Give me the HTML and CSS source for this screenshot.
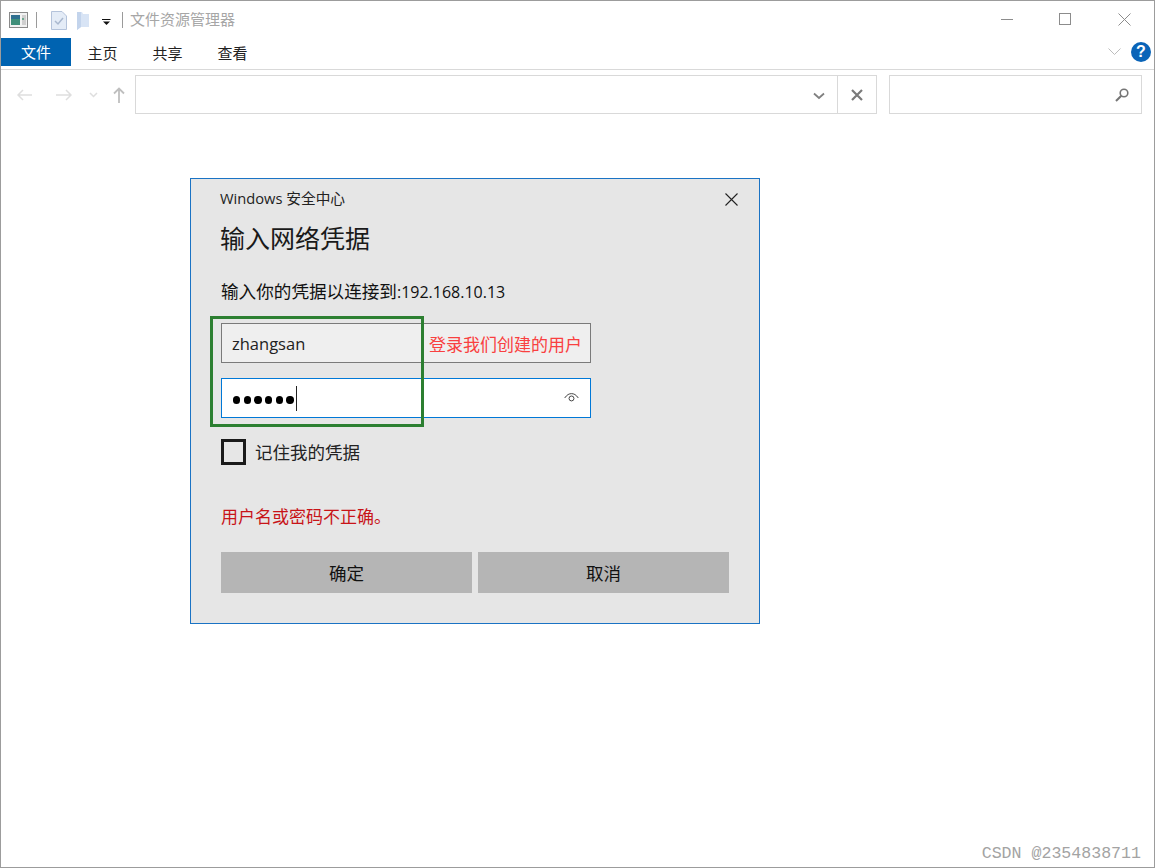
FILE: index.html
```html
<!DOCTYPE html>
<html lang="zh-CN">
<head>
<meta charset="utf-8">
<title>文件资源管理器</title>
<link rel="stylesheet" href="styles.css">
</head>
<body>
<div class="window">
  <header class="titlebar">
    <svg class="ic-app" width="20" height="16" viewBox="0 0 20 16"><rect x=".5" y=".5" width="18" height="15" fill="#f2f2f2" stroke="#8a8a8a"/><rect x="2" y="3" width="9" height="10" fill="#3f8f7a"/><rect x="2" y="3" width="9" height="4" fill="#2f6f8f"/><rect x="13" y="3" width="4" height="10" fill="#cfcfcf"/><rect x="13" y="6" width="2" height="2" fill="#6fa98f"/></svg>
    <span class="qsep"></span>
    <svg class="ic-doc" width="16" height="19" viewBox="0 0 16 19"><path d="M.5.5H11L15.5 5V18.5H.5Z" fill="#e4ecf7" stroke="#b4c3db"/><path d="M4 10l3 3 5-6" fill="none" stroke="#a9b8cf" stroke-width="1.5"/></svg>
    <svg class="ic-folder" width="13" height="18" viewBox="0 0 13 18"><path d="M0 0H5L6 2H12V15H4L0 18Z" fill="#d8e4f5"/><path d="M0 0H4V15L0 18Z" fill="#c3d4ec"/></svg>
    <svg class="ic-drop" width="9" height="6" viewBox="0 0 9 6"><path d="M0 .5H8.500" stroke="#111"/><path d="M1 2.500H8L4.500 6Z" fill="#111"/></svg>
    <span class="tsep"></span>
    <span class="wintitle">文件资源管理器</span>
    <div class="controls">
      <svg class="ctl-min" width="13" height="13" viewBox="0 0 13 13"><path d="M0 6.500H12" stroke="#8c8c8c"/></svg>
      <svg class="ctl-max" width="13" height="13" viewBox="0 0 13 13"><rect x=".5" y=".5" width="11" height="11" fill="none" stroke="#8c8c8c"/></svg>
      <svg class="ctl-close" width="13" height="13" viewBox="0 0 13 13"><path d="M.5.5L12.500 12.500M12.500.5L.5 12.500" stroke="#8c8c8c"/></svg>
    </div>
  </header>

  <nav class="tabs">
    <span class="tab tab-file">文件</span>
    <span class="tab">主页</span>
    <span class="tab">共享</span>
    <span class="tab">查看</span>
    <div class="tabs-right">
      <svg width="13" height="8" viewBox="0 0 13 8"><path d="M.5.5L6.500 6.500L12.500.5" fill="none" stroke="#bdbdbd"/></svg>
      <span class="help">?</span>
    </div>
  </nav>

  <div class="toolbar">
    <div class="navs">
      <svg class="nav-back" width="16" height="12" viewBox="0 0 16 12"><path d="M15 6H1M6 1L1 6L6 11" fill="none" stroke="#dedede" stroke-width="1.500"/></svg>
      <svg class="nav-fwd" width="16" height="12" viewBox="0 0 16 12"><path d="M0 6H15M10 1L15 6L10 11" fill="none" stroke="#dedede" stroke-width="1.500"/></svg>
      <svg class="nav-down" width="9" height="6" viewBox="0 0 9 6"><path d="M1 1L4.500 4.500L8 1" fill="none" stroke="#dedede" stroke-width="1.500"/></svg>
      <svg class="nav-up" width="12" height="16" viewBox="0 0 12 16"><path d="M6 16V2M1 6.500L6 1.500L11 6.500" fill="none" stroke="#bfbfbf" stroke-width="1.800"/></svg>
    </div>
    <div class="address">
      <div class="addr-main">
        <svg width="12" height="8" viewBox="0 0 12 8"><path d="M1 1.500L6 6L11 1.500" fill="none" stroke="#808080" stroke-width="1.800"/></svg>
      </div>
      <div class="addr-x">
        <svg width="12" height="12" viewBox="0 0 12 12"><path d="M1 1L11 11M11 1L1 11" stroke="#7a7a7a" stroke-width="2.200"/></svg>
      </div>
    </div>
    <div class="search">
      <svg width="14" height="14" viewBox="0 0 14 14"><circle cx="9" cy="5" r="3.800" fill="none" stroke="#757575" stroke-width="1.600"/><path d="M6.300 7.700L1 13" stroke="#757575" stroke-width="2"/></svg>
    </div>
  </div>

  <main class="content">
    <section class="dialog">
      <div class="dlg-top">
        <span class="dlg-app">Windows 安全中心</span>
        <svg class="dlg-close" width="13" height="13" viewBox="0 0 13 13"><path d="M.5.5L12.500 12.500M12.500.5L.5 12.500" stroke="#222" stroke-width="1.100"/></svg>
      </div>
      <h1 class="dlg-title">输入网络凭据</h1>
      <p class="dlg-msg"><span class="msg-cjk">输入你的凭据以连接到</span>:192.168.10.13</p>
      <div class="field field-user">
        <span class="user-value">zhangsan</span>
      </div>
      <div class="field field-pass">
        <span class="dots"><i></i><i></i><i></i><i></i><i></i><i></i></span>
        <span class="caret"></span>
        <svg class="eye" width="15" height="10" viewBox="0 0 16 11"><path d="M.5 5.500C3 1.800 5.500.7 8 .7S13 1.800 15.500 5.500" fill="none" stroke="#333"/><circle cx="8" cy="6" r="2.700" fill="none" stroke="#333"/></svg>
      </div>
      <div class="remember">
        <span class="checkbox"></span>
        <span class="remember-label">记住我的凭据</span>
      </div>
      <p class="error">用户名或密码不正确。</p>
      <div class="buttons">
        <button class="btn" type="button">确定</button>
        <button class="btn" type="button">取消</button>
      </div>
      <span class="annot-text">登录我们创建的用户</span>
      <span class="annot-box"></span>
    </section>
  </main>
  <span class="watermark">CSDN @2354838711</span>
</div>
</body>
</html>
```
FILE: styles.css
```css
* { box-sizing: border-box; }
html, body { margin: 0; padding: 0; background: #fff; }
body {
  width: 1155px;
  height: 868px;
  overflow: hidden;
  font-family: "Open Sans", "Noto Sans CJK SC", sans-serif;
  color: #111;
}
.window {
  position: relative;
  width: 1155px;
  height: 868px;
  border: 1px solid #9c9c9c;
  background: #fff;
  display: flex;
  flex-direction: column;
}
svg { display: block; flex: none; }

/* title bar */
.titlebar {
  height: 37px;
  display: flex;
  align-items: center;
  padding-left: 8px;
  flex: none;
}
.qsep { width: 1px; height: 16px; background: #9a9a9a; margin-left: 7px; }
.ic-doc { margin-left: 14px; margin-top: 2px; }
.ic-folder { margin-left: 10px; margin-top: 3px; }
.ic-drop { margin-left: 12px; margin-top: 4px; }
.tsep { width: 1px; height: 16px; background: #9a9a9a; margin-left: 11px; }
.wintitle {
  margin-left: 7px;
  margin-top: -3px;
  font-size: 15px;
  color: #a6a6a6;
  font-family: "Noto Sans CJK SC", sans-serif;
}
.controls {
  margin-left: auto;
  display: flex;
  align-items: center;
  padding-right: 23px;
}
.ctl-max { margin-left: 45px; }
.ctl-close { margin-left: 46px; }

/* tabs */
.tabs {
  height: 32px;
  flex: none;
  display: flex;
  align-items: flex-start;
  border-bottom: 1px solid #d9d9d9;
}
.tab {
  width: 65px;
  height: 28px;
  line-height: 30px;
  text-align: center;
  font-size: 15px;
  font-family: "Noto Sans CJK SC", sans-serif;
  color: #222;
}
.tab-file {
  width: 70px;
  margin-right: -1px;
  background: #0063b1;
  color: #fff;
  line-height: 28px;
}
.tabs-right {
  margin-left: auto;
  display: flex;
  align-items: center;
  gap: 10px;
  padding: 4px 3px 0 0;
}
.help {
  width: 20px;
  height: 20px;
  border-radius: 50%;
  background: #0a64b8;
  color: #fff;
  font: bold 16px/20px "Liberation Sans", sans-serif;
  text-align: center;
}

/* toolbar */
.toolbar {
  height: 45px;
  flex: none;
  display: flex;
  align-items: flex-start;
  padding-top: 5px;
}
.navs {
  width: 134px;
  height: 39px;
  display: flex;
  align-items: center;
  padding-left: 16px;
  flex: none;
}
.nav-fwd { margin-left: 23px; }
.nav-down { margin-left: 17px; }
.nav-up { margin-left: 15px; margin-top: 1px; }
.address {
  width: 742px;
  height: 39px;
  border: 1px solid #d9d9d9;
  display: flex;
  flex: none;
}
.addr-main {
  flex: 1;
  display: flex;
  align-items: center;
  justify-content: flex-end;
  padding-right: 12px;
  padding-top: 2px;
  border-right: 1px solid #d9d9d9;
}
.addr-x {
  width: 38px;
  display: flex;
  align-items: center;
  justify-content: center;
  padding-top: 1px;
}
.search {
  width: 253px;
  height: 39px;
  margin-left: 12px;
  border: 1px solid #d9d9d9;
  display: flex;
  align-items: center;
  justify-content: flex-end;
  padding-right: 12px;
  flex: none;
}

/* dialog */
.content {
  flex: 1;
  padding: 63px 0 0 189px;
}
.dialog {
  position: relative;
  width: 570px;
  height: 446px;
  border: 1px solid #1a73c4;
  background: #e6e6e6;
  padding: 0 30px;
}
.dlg-top {
  height: 38px;
  padding-bottom: 2px;
  display: flex;
  align-items: center;
  justify-content: space-between;
}
.dlg-app { font-size: 14.700px; color: #222; margin-left: -1px; }
.dlg-close { margin-right: -9px; margin-top: 4px; }
.dlg-title {
  margin: 3px 0 0 -1px;
  height: 36px;
  font-size: 25px;
  line-height: 36px;
  font-weight: 400;
  color: #1a1a1a;
}
.dlg-msg {
  margin: 22px 0 0;
  height: 26px;
  font-size: 16px;
  line-height: 26px;
  color: #111;
}
.msg-cjk { font-size: 17.600px; }
.field {
  width: 370px;
  height: 40px;
  display: flex;
  align-items: center;
}
.field-user {
  margin-top: 19px;
  border: 1px solid #7a7a7a;
  background: #efefef;
  padding-left: 10px;
}
.user-value { font-size: 16.500px; color: #222; }
.field-pass {
  margin-top: 15px;
  border: 1px solid #0078d7;
  background: #fff;
  padding-left: 11px;
}
.dots { display: flex; gap: 3.400px; margin-top: 4px; }
.dots i { width: 7.300px; height: 7.300px; border-radius: 50%; background: #000; display: block; }
.caret { width: 1px; height: 25px; background: #222; margin-left: 2px; }
.eye { margin-left: auto; margin-right: 11px; }
.remember {
  margin-top: 21px;
  height: 26px;
  display: flex;
  align-items: center;
}
.checkbox {
  width: 25px;
  height: 26px;
  border: 3px solid #1a1a1a;
  background: #e6e6e6;
  flex: none;
}
.remember-label { margin-left: 9px; margin-top: -1px; font-size: 17.500px; color: #222; }
.error {
  margin: 39px 0 0;
  height: 26px;
  font-size: 17px;
  line-height: 26px;
  color: #c81418;
}
.buttons {
  margin-top: 22px;
  display: flex;
  gap: 6px;
}
.btn {
  width: 251px;
  height: 41px;
  border: 0;
  background: #b5b5b5;
  font: 17.500px "Open Sans", "Noto Sans CJK SC", sans-serif;
  color: #111;
  padding: 0;
}

/* annotations over the dialog */
.annot-text {
  position: absolute;
  left: 238px;
  top: 153px;
  font-size: 17px;
  line-height: 26px;
  color: #f94040;
}
.annot-box {
  position: absolute;
  left: 19px;
  top: 137px;
  width: 214px;
  height: 111px;
  border: 3px solid #2c7f31;
}
.watermark {
  position: absolute;
  right: 13px;
  bottom: 3px;
  font: 16.600px/20px "Liberation Mono", monospace;
  color: #a3a3a3;
}
```
